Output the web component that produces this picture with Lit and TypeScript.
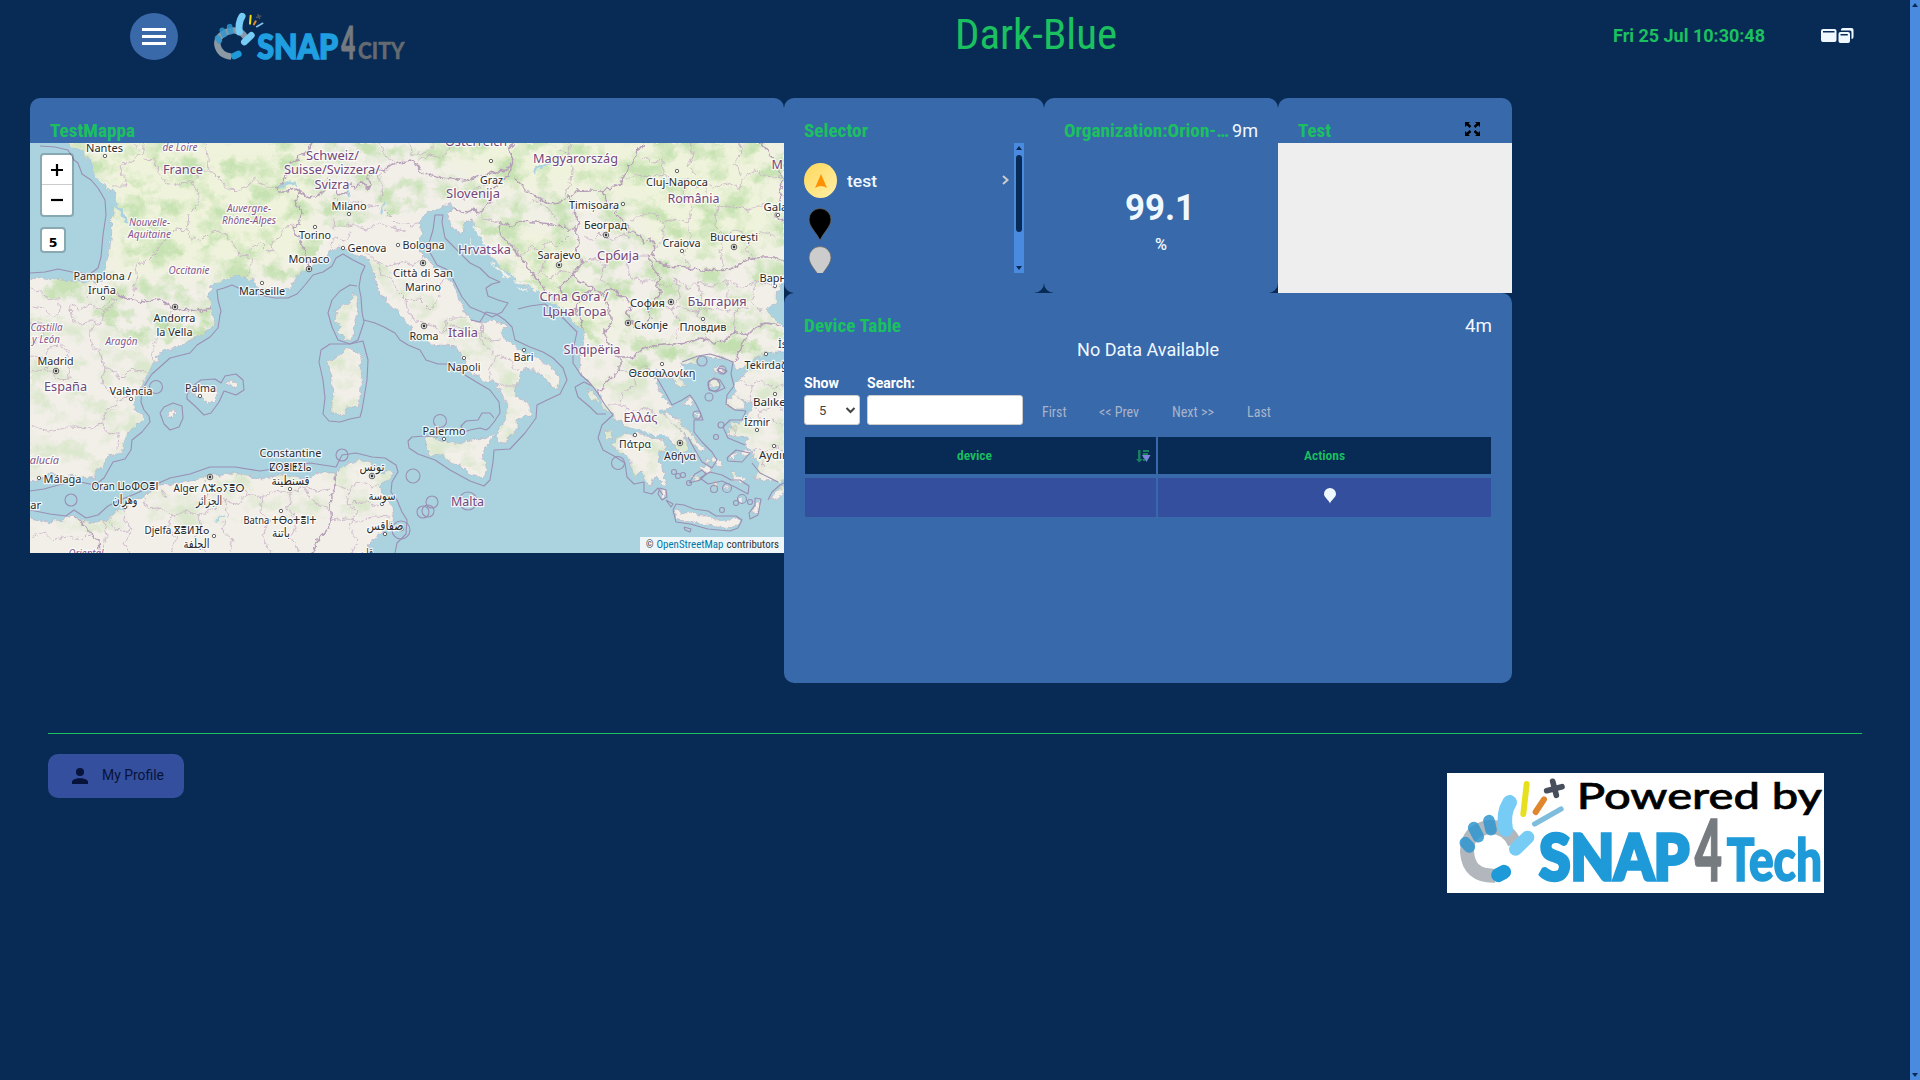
import { LitElement, html, svg, css } from "lit";
import { customElement } from "lit/decorators.js";

/** Single line of text set to an exact width; the baseline sits `size` px below the top. */
const line = (text: string, width: number, size: number, weight = 400, cls = "") => html`
  <svg class="line ${cls}" width=${width} height=${Math.round(size * 1.25)}>
    <text x="0" y=${size} font-size=${size} font-weight=${weight} textLength=${width}
      lengthAdjust="spacingAndGlyphs">${text}</text>
  </svg>`;

const LAND = [
  "66,143 74,148 83,151 85,156 93,161 92,168 96,176 103,185 110,190 114,188 116,197 113,207 112,223 112,236 110,250 105,270 101,280 97,282 77,282 60,279 40,278 30,279 24,279 24,485 30,483 38,480 47,474 58,476 67,476 80,477 92,478 98,471 102,465 108,456 116,454 122,453 124,442 128,433 136,426 145,419 140,414 135,410 133,405 135,400 138,392 142,385 146,377 150,370 153,363 160,361 157,357 162,351 170,349 181,345 190,340 203,334 213,327 215,317 210,308 209,298 209,290 214,285 220,282 229,277 235,275 247,278 254,280 256,287 262,288 270,291 277,291 285,290 292,285 297,277 303,272 310,268 320,261 330,250 340,247 348,250 357,257 367,258 373,270 375,279 378,287 381,295 387,300 392,308 400,313 407,323 413,330 420,337 428,341 435,345 446,345 455,347 462,356 467,361 467,370 475,374 480,378 488,383 494,380 497,384 500,390 502,396 505,400 507,406 508,412 505,418 503,423 499,429 497,433 496,438 497,442 505,444 510,435 516,433 517,428 517,420 523,416 530,415 530,407 528,403 522,399 517,397 515,391 517,385 520,375 525,368 532,370 540,372 544,378 550,382 551,387 558,389 561,380 554,370 547,365 535,357 523,353 513,345 503,338 501,331 507,325 498,322 490,321 480,323 470,320 463,310 460,303 456,293 453,283 445,274 437,270 430,263 425,257 420,250 420,243 422,232 418,220 427,212 436,209 443,207 450,205 454,207 448,213 449,220 452,227 456,231 460,235 464,228 465,220 472,219 476,228 480,237 487,246 488,253 497,263 503,270 510,275 520,284 527,287 540,293 550,302 557,305 563,310 570,316 573,323 581,327 585,331 584,340 583,347 580,360 580,370 583,377 587,380 593,386 597,392 602,398 603,407 609,413 613,415 617,421 624,424 630,427 638,432 653,436 661,437 667,437 673,443 680,452 688,450 687,442 684,435 673,423 666,416 660,412 665,409 673,408 668,402 663,397 659,390 657,383 656,375 657,370 661,371 664,376 672,380 681,386 687,386 679,377 683,374 689,379 684,370 680,363 690,364 697,362 699,357 703,356 714,358 722,358 733,363 737,368 744,367 755,360 765,352 784,352 784,352 790,352 790,325 784,327 780,323 772,316 765,310 770,307 777,303 776,296 778,290 781,284 784,283 790,283 790,138 66,138",
  "740,377 752,368 768,365 790,372 790,484 784,482 775,480 765,481 753,477 758,471 760,463 752,458 753,450 745,446 747,437 738,437 728,435 735,429 730,423 739,423 747,417 750,411 753,403 742,399 735,400 734,392 736,383",
  "618,437 613,444 619,453 625,454 630,460 630,468 635,477 638,475 642,472 645,480 650,487 653,480 655,475 661,481 667,488 664,478 663,467 659,460 657,453 662,451 667,452 666,446 663,440 656,438 647,437 640,434 633,435 626,433",
  "24,518 38,521 50,522 62,519 73,515 80,520 92,523 107,520 114,514 120,507 131,502 143,497 150,490 160,485 173,483 187,482 200,478 213,475 224,475 233,473 246,475 260,478 270,477 280,475 293,477 307,480 313,476 320,473 335,473 342,467 350,463 359,461 367,460 371,464 375,470 381,473 387,471 393,472 390,479 383,483 380,488 382,493 386,500 392,507 393,514 392,520 387,527 382,533 376,538 370,543 368,553 368,560 24,560",
  "353,292 355,296 357,303 357,315 355,323 354,333 350,342 344,337 338,332 340,326 335,322 336,315 335,311 340,307 347,304 351,302",
  "350,347 355,351 362,357 360,365 363,373 361,388 360,398 358,408 353,408 348,407 345,414 340,416 336,412 332,413 332,404 334,397 332,387 332,377 329,368 326,360 331,362 337,357 344,351",
  "425,440 430,436 435,438 439,441 450,442 459,444 468,441 477,439 488,437 495,434 490,443 484,452 482,459 487,468 485,474 483,479 475,475 468,473 461,466 450,462 440,456 430,454 425,449",
  "193,393 202,387 208,389 214,387 218,392 215,400 210,404 204,400 200,396 195,397",
  "227,382 232,381 238,385 236,388 229,385",
  "168,417 169,412 176,409 175,413 171,417",
  "674,511 679,510 681,514 690,512 698,516 707,516 715,521 728,520 733,518 740,520 737,525 733,528 720,526 706,525 696,523 684,521 676,519",
  "664,412 674,416 682,425 691,433 698,443 706,450 701,453 693,443 685,436 678,428 668,420",
  "728,398 735,395 744,402 742,409 732,409 727,404",
  "709,379 717,377 719,386 711,388",
  "728,428 735,427 734,438 729,435",
  "770,498 778,489 784,486 784,493 774,501",
  "604,430 610,431 613,438 607,440",
  "587,388 594,394 598,401 595,402 589,394",
  "712,458 722,462 720,467 713,463", "728,455 736,453 733,460", "741,452 752,450 747,456",
  "701,467 709,463 711,472 703,473", "731,472 746,480 743,484 733,479", "690,475 700,479 695,481",
  "712,485 717,482 717,490", "723,485 730,487 727,491", "756,503 762,500 757,515 752,513", "714,368 724,367 722,372 716,372",
  "661,489 666,490 665,498 661,494", "692,411 700,416 697,420", "683,402 691,398 693,404 684,406",
  "737,498 743,497 743,504 738,503", "705,459 711,460 708,464",
];

const NATIONS = [
  "117,294 125,298 133,300 143,302 150,301 158,299 163,303 171,307 177,308 185,311 193,309 201,311 212,309",
  "310,268 306,258 304,247 300,240 295,232 293,228 299,223 301,216 303,212 298,206 296,200 300,193 297,188 288,192 280,192 276,189 283,183 288,173 291,163 299,157 306,152 312,143",
  "300,193 308,197 320,195 325,190 328,180 334,186 340,195 347,193 350,184 355,188 362,182 367,188 372,186 368,178 371,170 378,168 385,172 387,166 393,164 400,163 409,160 416,163 420,171 429,175 440,178 451,179 466,181 477,176 487,175 497,171 507,170 514,160 508,150 514,143",
  "514,160 511,167 510,176 500,181 494,187 488,192 490,199 486,205 484,210 479,213 472,210 465,213 458,210 453,207",
  "514,178 522,185 529,192 538,198 550,203 562,202 569,196 577,191 590,190 602,190 613,188 622,181 627,169 633,160 639,149 644,143",
  "569,196 573,205 575,215 580,222 577,230",
  "602,190 606,199 613,207 618,215 624,222 629,231 640,235 644,243 650,239 656,245",
  "656,245 652,253 656,260 666,266 681,267 700,270 721,271 735,267 747,260 761,257 775,257 784,262",
  "656,245 649,258 654,269 661,278 656,286 661,293 655,299 649,311 651,318 645,327",
  "500,222 510,227 519,221 535,222 551,224 563,225 569,231 575,228 580,240 576,252 583,262 577,270 572,276 564,282 559,288 563,296 555,300 548,294",
  "500,222 499,231 505,239 513,247 519,256 526,264 533,274 540,283 545,292",
  "572,276 580,281 592,287 602,295 610,288 621,295 632,305 627,313 631,320 634,327 645,327",
  "592,287 585,296 577,303 576,313 580,319 584,330",
  "602,295 608,306 611,317 611,324 604,332 608,342 613,350 620,359 620,369 614,376 606,381 602,390 597,394",
  "620,357 633,357 643,349 656,345 664,344 674,343 690,342 701,338 713,343 724,341 735,331 748,335 742,347 738,355 735,363",
  "748,335 757,326 766,323 780,325",
  "760,143 768,152 774,160 782,178 780,200 775,216 784,222",
  "335,473 336,485 331,495 330,508 332,520 326,532 318,541 312,553",
  "73,515 84,525 91,534 99,540 100,553",
  "30,345 26,350",
];

const REGIONS = [
  "145,143 142,155 133,160 120,165 123,176 127,186 113,186", "142,159 155,160 160,175 168,184 180,183 193,181 201,172 208,172 213,172 220,179 227,189 240,190 249,186 254,179 262,184 270,187 280,188",
  "206,143 208,158 209,172", "193,181 199,194 197,206 189,214 187,230 191,239 202,240 210,232 220,231 229,238 235,247 242,256 252,258 250,268 246,278",
  "187,230 175,229 166,238 158,250 147,261 135,266 137,280 132,296", "249,249 260,243 267,250 275,252 270,243 280,237 284,229 295,224",
  "30,288 38,290 50,300 58,297 60,311 54,318 44,309 32,307", "69,303 80,309 90,305 102,308 112,299 118,300", "70,304 71,317 80,325 91,320 100,325 104,312 118,300", "87,298 95,285 104,275",
  "135,143 140,152", "172,311 167,325 157,338 152,351 153,362", "96,320 90,332 91,345 101,354 104,367 114,371 120,380 131,369 142,371 150,374",
  "30,372 43,370 54,364 68,359 69,351 60,345 52,346 43,357 30,356", "68,359 69,380 58,379 46,368", "105,367 102,385 110,391 118,400 130,396 136,388",
  "30,425 48,431 71,427 95,428 101,422 108,409 119,404", "101,422 107,433 119,434 118,448", "30,323 43,323 45,335 30,344",
  "334,198 345,208 350,202 362,204 376,206 385,211 397,223 412,225 420,222", "335,218 334,228 350,224 366,230 380,223 396,229 406,231", "330,247 335,238 346,240 351,230", "351,248 366,252 377,261 388,266 405,262 414,266 424,255", "377,261 382,275 392,279 398,292 406,300 420,299 430,309 440,298 438,286 447,277", "406,300 407,311 416,322 430,324 440,332 454,325 455,341", "440,332 450,318 466,318", "454,325 467,331 479,334 485,346 497,356 510,360 518,371", "482,323 481,335 491,341 503,340", "497,356 489,368 491,380", "500,386 517,386",
  "380,143 385,155 395,162", "390,168 378,178 384,190 380,202", "410,143 412,154 422,154 434,146", "418,161 428,154 440,158 450,149 451,143",
  "464,200 470,190 483,186 496,180", "500,222 488,221 477,214", "533,200 547,208 556,219", "571,143 568,155 573,168 571,180 565,196", "571,155 560,150", "644,156 652,162 663,160 664,174 677,184 686,180 697,188 705,181 713,187 727,183 740,188",
  "664,174 650,177 636,175 626,179", "686,180 684,195 692,208 688,222 675,219 663,222 655,214 643,214 632,220", "705,181 708,198 718,208 714,225 725,236 738,229 750,238 762,231 775,236", "718,208 733,206 748,211 765,203 780,209", "740,188 745,176 756,170 765,176 780,178", "740,143 742,155 733,163 741,175", "690,143 694,155 687,166 695,175", "663,222 664,237 656,248", "688,222 691,241 684,254 690,267", "725,236 720,251 724,268", "750,238 746,250 755,257",
  "503,239 515,245 520,256 531,247 541,251 547,241 558,246 567,237", "541,251 545,262 539,274 551,278 560,270 573,274", "583,236 594,240 601,233 613,241 622,234 631,238", "583,262 595,258 605,265 615,258 627,262 640,256 650,256", "605,265 602,278 610,288", "627,262 630,276 641,282 657,279",
  "656,282 667,287 676,279 688,289 697,281 712,287 727,280 742,288 757,281 775,287", "676,279 680,296 672,309 680,324 675,340", "697,281 703,299 697,315 708,328 704,338", "727,280 728,297 739,305 733,320 735,331", "757,281 752,300 762,314", "651,303 665,309 680,307 695,312 712,309 730,311 748,306",
  "620,370 634,374 645,366 652,372", "634,374 636,386 622,391 620,404 632,411 645,408 655,413", "620,404 608,404",
  "30,537 44,532 53,540 66,536 80,540 90,534", "104,521 107,536 103,548", "128,503 124,518 132,530 124,543 130,553", "143,498 148,510 163,508 172,516 187,510 198,516 212,509 224,500 238,504 247,494 262,497 275,490 290,493 303,486 316,492 330,490", "172,516 167,530 177,538 170,552", "198,516 201,528 195,540 207,553", "224,500 228,515 222,530 233,540 231,553", "262,497 260,511 269,521 262,537 271,553", "290,493 288,509 297,520 291,538 300,551", "247,494 240,483", "303,486 314,502 330,510", "335,485 348,489 360,482 372,487 380,484", "350,488 347,503 357,512 349,528 357,540 352,553", "331,520 347,518 360,522 375,516 390,517", "347,503 365,502 380,506", "160,488 167,498", "205,480 208,495 198,502", "107,520 120,532 132,530",
  "740,380 752,386 760,380 775,388 784,385", "752,386 751,402 760,412 773,405 784,410", "747,418 760,424 772,420 784,427", "753,448 765,452 775,446 784,450", "760,412 758,424", "765,452 763,468",
];

const MARINE = [
  "30,273 45,272 58,269 72,272 90,274 98,268 101,257 103,235 106,215 105,200 98,188 91,180 82,174 78,163 74,160 68,150 55,147 40,146",
  "30,491 44,489 62,484 80,482 95,485 104,478 113,462 125,459 131,450 132,440 142,432 150,422 149,416 144,410 141,402 142,390 148,380 152,374 160,367 170,358 190,353 197,345 210,337 218,328 220,315 221,311 218,300 217,290 224,288 232,285 245,291 260,295 275,298 288,298 297,294 305,285 313,275 323,272 332,266 336,258 343,254 353,260 365,266 361,275 359,287 361,297 362,312 364,322 358,340 350,344 338,340 332,327 328,313 332,300 340,291 350,285 357,286",
  "364,320 375,323 384,327 395,333 400,340 408,345 420,350 426,360 438,364 452,364 465,375 478,383 490,390 499,402 500,413 494,422 489,428 486,430",
  "486,430 480,428 470,430 464,432 461,426 466,421 478,420 482,413 490,413 494,418",
  "471,320 480,322 486,312 496,314 505,320 512,327 515,340 530,347 543,352 553,358 563,368 567,380 560,394 545,401 537,405 536,418 525,433 510,449 494,450 493,462 490,480 484,486 470,481 450,470 435,460 418,454 409,448 408,441 412,437 424,436 438,437",
  "427,247 437,265 448,270 455,283 462,297 470,307 482,312 492,317 502,312 508,303 498,300 488,296 486,288 492,284 500,282 489,277 480,268 470,263 460,253 445,238 442,222 443,215 435,215 433,230 430,240 427,247",
  "518,309 530,306 545,304 560,315 570,325 577,332 573,350 573,363 581,375 590,383 597,392 605,405 613,415 602,425 598,438 603,450 614,456 625,463 627,477 634,484 644,482 644,492 652,494 658,488 663,495",
  "575,387 578,397 590,407 597,414 606,414", "575,387 584,382 592,386",
  "30,510 50,514 66,516 74,510 86,518 98,515 108,506 120,500 135,494 150,487 170,478 190,474 210,467 235,467 260,471 285,467 310,463 336,467 342,455 356,453 372,457 385,458 396,465 398,472 392,482 391,492 397,500 402,512 407,520 406,534 397,543 395,553",
  "350,344 363,341 368,360 367,380 362,410 360,417 350,419 340,422 329,421 323,414 325,398 323,380 319,362 321,350 330,344 350,344",
  "187,395 190,388 201,380 215,379 221,383 225,376 236,374 243,380 244,390 236,395 224,391 219,402 211,413 204,415 195,406 187,399 187,395",
  "160,413 164,407 173,403 182,406 183,418 179,427 170,430 164,424 160,413",
  "673,510 676,504 684,505 694,509 708,511 716,516 728,516 736,516 742,520 738,528 730,531 708,529 690,524 676,522 673,510",
  "657,378 665,392 672,405 682,400 690,395 695,402 700,412 703,420 694,420 694,432 702,442 712,452 717,460 712,468 702,462 695,450 688,437",
  "682,362 690,359 698,356 710,354 723,358 733,362 731,374 734,386 727,395 726,404 735,410 746,411 742,420 730,420 723,427 728,438 745,445",
  "708,382 714,378 720,380 725,388 716,392 709,390 708,382", "720,368 727,371 724,374 717,370 720,368",
  "700,478 710,472 722,475 731,480 740,480 749,486 748,494 735,487 722,481 708,484 700,478",
  "689,483 700,480 706,474 702,470 695,474 689,483", "768,500 772,492 780,485 784,483", "755,498 761,499 758,515 750,519 749,513 755,505 755,498",
  "727,458 736,450 750,453 742,462 728,461 727,458", "752,463 760,473 770,478 778,482",
  "660,488 666,490 667,497 662,500 658,494 660,488", "666,500 673,504 671,507 666,500", "684,527 691,529 690,532 685,530 684,527",
];

const RINGS: [number, number, number][] = [
  [156, 387, 6.5], [71, 500, 6], [342, 455, 6], [440, 421, 6.5], [413, 476, 7], [432, 502, 6], [423, 512, 6], [428, 511, 6],
  [468, 501, 9], [618, 463, 6.5], [401, 530, 9], [674, 472, 2.5], [678, 476, 2.5], [683, 475, 2.5], [716, 437, 2.5], [714, 489, 3.5],
  [727, 488, 4.5], [736, 503, 2.5], [742, 499, 4.5], [750, 502, 2.5], [722, 510, 2.5], [721, 425, 3], [709, 397, 4], [722, 370, 4],
  [702, 361, 5], [714, 385, 6], [689, 483, 2.5], [697, 415, 4],
];

type Label = [string, number, number, number, number];
/* text, centre x, baseline, width, size */
const CITIES: Label[] = [
  ["Nantes", 104.5, 152, 37, 11.5], ["Milano", 349, 210, 35, 11.5], ["Torino", 315, 238.5, 32, 11.5], ["Genova", 367, 252, 39, 11.5],
  ["Monaco", 309, 263, 41, 11.5], ["Marseille", 262, 295, 46, 11.5], ["Pamplona /", 102.5, 280, 58, 11.5], ["Iruña", 102, 294, 28, 11.5],
  ["Andorra", 174.5, 322, 42, 11.5], ["la Vella", 174.5, 336, 36, 11.5], ["Graz", 491.5, 183.5, 23, 11.5], ["Cluj-Napoca", 677, 185.5, 62, 11.5],
  ["Timișoara", 594, 209, 50, 11.5], ["Београд", 605.5, 229, 43, 11.5], ["Bologna", 423.5, 249, 42, 11.5], ["Città di San", 423, 277, 60, 11.5],
  ["Marino", 423, 291, 36, 11.5], ["Sarajevo", 559, 259, 43, 11.5], ["Craiova", 681.5, 247, 38, 11.5], ["București", 734, 241, 48, 11.5],
  ["Варна", 776, 282, 33, 11.5], ["София", 647.5, 307, 35, 11.5], ["Скопје", 651, 328.5, 34, 11.5], ["Пловдив", 703, 330.5, 47, 11.5],
  ["Galați", 779, 211, 31, 11.5], ["Madrid", 55.5, 365, 36, 11.5], ["València", 131, 395, 43, 11.5], ["Palma", 200.5, 392, 31, 11.5],
  ["Málaga", 62.5, 483, 38, 11.5], ["Constantine", 290.5, 457, 62, 11.5], ["Roma", 424, 340, 29, 11.5], ["Napoli", 464, 371, 33, 11.5],
  ["Bari", 523.5, 361, 20, 11.5], ["Palermo", 444, 435, 43, 11.5], ["Θεσσαλονίκη", 662, 377, 67, 11.5], ["Πάτρα", 635, 448, 32, 11.5],
  ["Αθήνα", 680, 460, 32, 11.5], ["Tekirdağ", 766, 369, 43, 11.5], ["Balıkesir", 776, 406, 46, 11.5], ["İzmir", 757, 426, 26, 11.5],
  ["Aydın", 774, 459, 30, 11.5], ["İstanbul", 799, 348, 42, 11.5], ["Gibraltar", 18, 509, 46, 11.5],
  ["Oran ⵡⴰⵀⵔⴻⵏ", 125, 490, 67, 11.5], ["وهران", 125, 504, 25, 12.5], ["Alger ⴷⵣⴰⵢⴻⵔ", 209, 491.5, 71, 11.5], ["الجزائر", 209, 505, 26, 12.5],
  ["ⵇⵙⴻⵏⵟⵉⵏⴰ", 290.5, 471, 42, 11], ["قسنطينة", 290.5, 485, 38, 12.5], ["تونس", 372, 471, 25, 12.5], ["سوسة", 382, 500, 27, 12.5],
  ["صفاقس", 385, 530, 37, 12.5], ["Batna ⵜⴱⴰⵜⴻⵏⵜ", 280, 524, 73, 11.5], ["باتنة", 281, 537, 18, 12.5], ["Djelfa ⴵⴻⵍⴼⴰ", 177, 534, 65, 11.5],
  ["الجلفة", 196.5, 548, 26, 12.5], ["قابس", 363, 557, 20, 12],
];
const COUNTRIES: Label[] = [
  ["France", 183, 174, 40, 13], ["Schweiz/", 332.5, 159.5, 53, 13], ["Suisse/Svizzera/", 332, 174, 96, 13], ["Svizra", 332, 189, 35, 13],
  ["Österreich", 476, 145.5, 62, 13], ["Magyarország", 575.5, 163, 85, 13], ["Slovenija", 473, 197.5, 54, 13], ["Hrvatska", 484.5, 254, 53, 13],
  ["România", 693.5, 203, 52, 13], ["Србија", 618, 260, 42, 13], ["Crna Gora /", 574, 301, 69, 13], ["Црна Гора", 574.5, 316, 64, 13],
  ["България", 717, 305.5, 59, 13], ["Moldova", 797, 169, 51, 13], ["España", 65.5, 391, 43, 13], ["Italia", 463, 337, 30, 13],
  ["Shqipëria", 592, 354, 57, 13], ["Ελλάς", 640.5, 422, 34, 13], ["Malta", 467.5, 506, 33, 13],
];
const PROVINCES: Label[] = [
  ["de Loire", 180, 151, 35, 11], ["Nouvelle-", 149.5, 226, 41, 11], ["Aquitaine", 149.5, 238, 43, 11],
  ["Auvergne-", 249, 212, 44, 11], ["Rhône-Alpes", 249, 223.5, 54, 11], ["Occitanie", 189, 274, 41, 11], ["Castilla", 46.5, 331, 32, 11],
  ["y León", 46, 343, 28, 11], ["Aragón", 121.5, 345, 32, 11], ["Andalucía", 35, 464, 48, 11], ["Oriental", 86, 557, 35, 11],
];
const TOWNS: [number, number][] = [
  [105, 156], [349, 214], [315, 227], [343, 248], [398, 245], [262, 283], [103, 298], [491, 161], [677, 171], [623, 204], [682, 251],
  [775, 286], [703, 319], [778, 215], [131, 399], [200, 396], [39, 478], [290, 489], [464, 358], [524, 350], [444, 439], [662, 364],
  [635, 435], [766, 354], [775, 394], [757, 430], [774, 446], [125, 507], [382, 504], [385, 534], [281, 511], [214, 536],
];
const CAPITALS: [number, number][] = [
  [309, 269], [175, 307], [606, 235], [423, 263], [559, 265], [734, 247], [671, 302], [628, 323], [56, 371], [424, 326], [680, 443],
  [210, 477], [372, 476], [401, 528],
];

const labels = (items: Label[], cls: string) =>
  items.map(([t, x, y, w, s]) => svg`<text class=${cls} x=${x} y=${y} font-size=${s} textLength=${w}
    lengthAdjust="spacingAndGlyphs" text-anchor="middle">${t}</text>`);

@customElement("geo-map")
class GeoMap extends LitElement {
  static styles = css`
    :host { display: block; width: 754px; height: 410px; position: relative; overflow: hidden; }
    svg { display: block; }
    .coast { fill: #f2efe9; stroke: #b9a3bd; stroke-width: .5; }
    .nation { fill: none; stroke: #b79fb9; stroke-width: 1.5; }
    .region { fill: none; stroke: #c6afc6; stroke-width: .8; }
    .marine { fill: none; stroke: #9a8fb3; stroke-width: 1.1; stroke-linejoin: round; }
    .town { fill: #fff; stroke: #555; stroke-width: .9; }
    .dot { fill: #333; }
    text { font-family: "Noto Sans", "DejaVu Sans", sans-serif; paint-order: stroke; stroke: #fffc; stroke-width: 2.6px; stroke-linejoin: round; }
    .city { fill: #2c2c2c; }
    .country { fill: #74477c; }
    .province { fill: #85588c; font-style: italic; }
    .controls { position: absolute; left: 10px; top: 10px; display: flex; flex-direction: column; gap: 10px; align-items: flex-start; }
    .zoom, .level { border: 2px solid #0003; border-radius: 4px; background-clip: padding-box; background-color: #fff; color: #000; }
    .zoom { width: 30px; }
    .key { height: 29px; display: grid; place-items: center; }
    .key + .key { border-top: 1px solid #ccc; height: 30px; }
    .level { display: grid; place-items: center; font: 700 12.5px/20px "DejaVu Sans", sans-serif; box-sizing: border-box; width: 26px; height: 26px; padding-top: 4px; }
    .credit { position: absolute; right: 0; bottom: 0; width: 138px; height: 16px; padding-left: 6px; background: #fffc; }
    .credit text { font-family: "Roboto Condensed", Roboto, sans-serif; stroke: none; fill: #333; }
    .credit .link { fill: #0078a8; }
  `;
  render() {
    return html`
      <svg width="754" height="410" viewBox="30 143 754 410">
        <defs>
          <clipPath id="land">${LAND.map((p) => svg`<polygon points=${p} />`)}</clipPath>
          <filter id="rough" x="30" y="143" width="754" height="410" filterUnits="userSpaceOnUse">
            <feTurbulence type="fractalNoise" baseFrequency="0.17" numOctaves="3" seed="4" result="n" />
            <feDisplacementMap in="SourceGraphic" in2="n" scale="7" xChannelSelector="R" yChannelSelector="G" />
          </filter>
          <filter id="wood" x="30" y="143" width="754" height="410" filterUnits="userSpaceOnUse" color-interpolation-filters="sRGB">
            <feTurbulence type="fractalNoise" baseFrequency="0.04 0.05" numOctaves="6" seed="23" result="n" />
            <feColorMatrix in="n" values="0 0 0 0 .74  0 0 0 0 .87  0 0 0 0 .66  3.4 0 0 0 -1.5" result="c" />
            <feComposite in="c" in2="SourceAlpha" operator="in" />
          </filter>
          <filter id="soft"><feGaussianBlur stdDeviation="14" /></filter>
        </defs>
        <rect x="30" y="143" width="754" height="410" fill="#aad3df" />
        <g filter="url(#rough)">
          ${LAND.map((p) => svg`<polygon class="coast" points=${p} />`)}
          <g clip-path="url(#land)">
            <g filter="url(#soft)" fill="#eff3db">
              <polygon points="60,130 320,130 310,260 220,275 110,280 100,190" />
              <polygon points="400,130 780,130 784,250 660,260 620,200 500,190" />
              <polygon points="490,220 560,230 580,290 650,340 560,330" />
            </g>
            <g filter="url(#wood)" opacity=".8">
              <polygon points="60,138 790,138 790,345 640,370 600,345 500,270 440,205 330,230 300,280 210,300 220,330 160,360 100,320 30,320 30,278 110,270 110,190" />
            </g>
            <g filter="url(#wood)" opacity=".42">
              <polygon points="30,320 220,320 100,480 30,480" /><polygon points="30,480 400,455 400,515 30,535" />
              <polygon points="360,250 570,390 500,480 420,450 470,360 390,300" /><polygon points="330,290 365,290 365,420 325,420" />
              <polygon points="580,340 790,340 790,490 600,490" />
            </g>
            ${REGIONS.map((p) => svg`<polyline class="region" points=${p} />`)}
            ${NATIONS.map((p) => svg`<polyline class="nation" points=${p} />`)}
          </g>
          <g fill="none" stroke="#aad3df">
            <path stroke-width="3" d="M113 203l8 8 6 12M279 188q8-8 17-4M532 172l12-6 10-5" />
            <path stroke-width="2" d="M380 215l5-12M350 197l-3-10M118 507l7 3M216 522l7-7M625 427l30 9 14 2M744 368l20-6M467 222l12 25 14 18 14 8" />
            <path stroke-width="2" stroke-dasharray="7 3" d="M471 220l6 24 14 16 22 18 26 14M510 285l22 9" />
          </g>
        </g>
        <g fill="#f2efe9" filter="url(#rough)">
          <path d="M474 226l5 3 10 17-3 1-10-16zM490 262l12 7 9 9-4 0zM513 280l16 3 2 2-14-1zM516 287l18 4-12-1zM470 238l4 8-3-1z" />
        </g>
        ${MARINE.map((p) => svg`<polyline class="marine" points=${p} />`)}
        ${RINGS.map(([x, y, r]) => svg`<circle class="marine" cx=${x} cy=${y} r=${r} />`)}
        ${TOWNS.map(([x, y]) => svg`<circle class="town" cx=${x} cy=${y} r="1.7" />`)}
        ${CAPITALS.map(([x, y]) => svg`<circle class="town" cx=${x} cy=${y} r="2.8" /><circle class="dot" cx=${x} cy=${y} r="1.4" />`)}
        ${labels(PROVINCES, "province")} ${labels(COUNTRIES, "country")} ${labels(CITIES, "city")}
      </svg>
      <div class="controls">
        <div class="zoom">
          <div class="key"><svg width="14" height="14"><path d="M1 7h12M7 1v12" stroke="#000" stroke-width="2.2" /></svg></div>
          <div class="key"><svg width="14" height="14"><path d="M1 7h12" stroke="#000" stroke-width="2.2" /></svg></div>
        </div>
        <div class="level">5</div>
      </div>
      <div class="credit">
        <svg width="134" height="16" font-size="11.5">
          <text x="0" y="11" textLength="7.5" lengthAdjust="spacingAndGlyphs">©</text>
          <text class="link" x="10.500" y="11" textLength="67" lengthAdjust="spacingAndGlyphs">OpenStreetMap</text>
          <text x="80.5" y="11" textLength="52.5" lengthAdjust="spacingAndGlyphs">contributors</text>
        </svg>
      </div>`;
  }
}

const cityLogo = html`
  <svg class="logo" width="192" height="48" viewBox="342 36 576 144">
    <g fill="none" stroke-linecap="round">
      <path d="M440 118Q424 86 392 92Q350 104 352 134Q358 166 394 170" stroke="#8b99a5" stroke-width="19" stroke-linecap="butt" />
      <path d="M403 168L415 162" stroke="#1f9ad8" stroke-width="20" />
      <path d="M426 49Q414 68 418 96" stroke="#76ccf4" stroke-width="21" />
      <path d="M433 126L454 106" stroke="#76ccf4" stroke-width="20" />
      <g stroke="#2f97cf" stroke-opacity=".85" stroke-width="17"><path d="M353 114l5 8M367 91l5 13M389 80l3 15" /></g>
      <path d="M452 47l-2 24" stroke="#f0e010" stroke-width="6" />
      <path d="M467 64l-5 9" stroke="#e8862a" stroke-width="6" />
      <path d="M470 80l18-10" stroke="#7fc4e8" stroke-width="5" />
      <path d="M470 52l12-4M474 44l5 11" stroke="#4c525b" stroke-width="5" />
    </g>
    <g class="brand">
      <text x="472" y="177" font-size="102" textLength="242" lengthAdjust="spacingAndGlyphs" fill="#1f9ee0" stroke="#1f9ee0" stroke-width="5">SNAP</text>
      <text x="724" y="177" font-size="138" textLength="42" lengthAdjust="spacingAndGlyphs" fill="#757a80" stroke="#757a80" stroke-width="3">4</text>
      <text x="774" y="177" font-size="68" textLength="140" lengthAdjust="spacingAndGlyphs" fill="#646a70" stroke="#646a70" stroke-width="1">CITY</text>
    </g>
  </svg>`;

const techLogo = html`
  <svg class="powered" width="377" height="120" viewBox="51 39 1131 360">
    <rect x="51" y="39" width="1131" height="360" fill="#fff" />
    <g fill="none" stroke-linecap="round">
      <path d="M254 250Q232 200 180 201Q110 210 111 275Q116 350 195 347" stroke="#b1b7bc" stroke-width="42" stroke-linecap="butt" />
      <path d="M205 345L222 336" stroke="#1f9ad8" stroke-width="43" />
      <path d="M239 127Q218 160 227 208" stroke="#76ccf4" stroke-width="44" />
      <path d="M257 267L293 232" stroke="#76ccf4" stroke-width="40" />
      <g stroke="#2f97cf" stroke-opacity=".85" stroke-width="35"><path d="M106 248l12 13M131 203l14 27M177 182l6 27" /></g>
      <path d="M290 72l-10 90" stroke="#e6e01e" stroke-width="18" />
      <path d="M342 118l-25 38" stroke="#e0862c" stroke-width="18" />
      <path d="M314 192l79-45" stroke="#7fbddd" stroke-width="16" />
      <path d="M350 92l46-12M368 64l11 42" stroke="#474e5c" stroke-width="17" />
    </g>
    <text class="poweredby" x="440" y="147" font-size="112" textLength="736" lengthAdjust="spacingAndGlyphs">Powered by</text>
    <g class="brand">
      <text x="328" y="361" font-size="186" textLength="450" lengthAdjust="spacingAndGlyphs" fill="#1f9ad8" stroke="#1f9ad8" stroke-width="11">SNAP</text>
      <text x="794" y="362" font-size="258" textLength="82" lengthAdjust="spacingAndGlyphs" fill="#767b80" stroke="#767b80" stroke-width="5">4</text>
      <text x="890" y="362" font-size="176" textLength="286" lengthAdjust="spacingAndGlyphs" fill="#1f9ad8" stroke="#1f9ad8" stroke-width="5">Tech</text>
    </g>
  </svg>`;

const pin = (fill: string) => html`<svg class="pin" width="24" height="34" viewBox="0 0 24 34">
  <path d="M12 32.500C9 25 1 19 1 11.500a11 11 0 0 1 22 0C23 19 15 25 12 32.500z" fill=${fill} stroke="#666" stroke-width=".8" /></svg>`;

@customElement("app-root")
class AppRoot extends LitElement {
  static styles = css`
    :host { display: block; width: 1920px; height: 1080px; overflow: hidden; background: #082b56; font-family: Roboto, sans-serif; color: #f0f8ff; }
    svg { display: block; flex: none; }
    .line { overflow: visible; fill: currentColor; font-family: "Roboto Condensed", Roboto, sans-serif; }
    .wide { font-family: Roboto, sans-serif; }
    .green { color: #1bc15f; }
    .page { display: grid; grid-template-columns: 1fr 10px; height: 1080px; }
    .rail { background: #4a8bdf; display: flex; flex-direction: column; justify-content: space-between; align-items: center; }
    header { display: grid; grid-template-columns: 48px 228px 1fr auto auto; height: 98px; padding: 0 56px 0 130px; box-sizing: border-box; align-items: start; }
    .burger { width: 48px; height: 47px; margin-top: 13px; border-radius: 50%; background: #3a69aa; display: grid; place-items: center; }
    .logo { margin: 12px 0 0 36px; overflow: visible; }
    .brand { font-family: Lato, sans-serif; font-weight: 900; }
    .poweredby { font-family: Lato, sans-serif; font-weight: 500; stroke: #000; stroke-width: 2px; }
    .heading { padding: 7px 0 0 549px; }
    .clock { padding: 24px 56px 0 0; }
    .screens { padding-top: 28px; }
    .board { display: grid; grid-template-columns: 754px 260px 234px 234px; grid-template-rows: 195px 390px; padding-left: 30px; }
    .card { background: #3869aa; border-radius: 10px; box-sizing: border-box; min-width: 0; }
    .map { grid-row: span 2; height: 455px; border-radius: 10px 10px 0 0; }
    .bar { display: flex; justify-content: space-between; height: 45px; padding: 20px 20px 0; box-sizing: border-box; }
    .list { display: flex; height: 130px; padding: 0 20px; }
    .items { flex: 1; overflow: hidden; padding-top: 20px; height: 110px; }
    .entry { display: flex; align-items: center; height: 35px; margin-bottom: 10px; }
    .entry .line { margin: -1px auto 0 10px; }
    .badge { width: 33px; height: 35px; border-radius: 50%; background: linear-gradient(135deg, #ffd75a, #fff0a8); display: grid; place-items: center; }
    .chev { margin: 0 5px 1px 0; }
    .pin { margin: 0 0 4px 4px; }
    .scroll { width: 10px; background: #4a8bdf; display: flex; flex-direction: column; align-items: center; box-sizing: border-box; padding: 3px 0; }
    .thumb { width: 6px; height: 77px; border-radius: 3px; background: #082b56; margin: 5px 0 auto; }
    .value { display: flex; flex-direction: column; align-items: center; padding: 41px 3px 0 0; }
    .unit { margin: 5px 0 0 3px; }
    .frame { background: #eee; height: 150px; }
    .square { border-radius: 10px 10px 0 0; }
    .expand { margin: 4px 12px 0 0; }
    .table { grid-column: 2 / 5; }
    .nodata { display: flex; justify-content: center; height: 36px; }
    .tools { display: flex; height: 52px; padding-left: 20px; color: #fff; }
    .field { display: flex; flex-direction: column; gap: 3px; margin-right: 7px; }
    .box { height: 28px; border: 1px solid #ccc; border-radius: 3px; background: #fff; color: #444; display: flex; align-items: center; justify-content: space-between; box-sizing: content-box; }
    .select { width: 54px; font-size: 13px; }
    .select span { margin-left: 14px; }
    .select svg { margin-right: 3px; }
    .search { width: 154px; }
    .pager { display: flex; gap: 32.700px; padding: 29px 0 0 12px; color: #a9b4cb; }
    .rows { display: grid; grid-template-columns: 351px 333px; grid-template-rows: 37px 39px; gap: 4px 2px; padding: 11px 0 0 21px; }
    .cell { background: #344f9d; display: grid; place-items: center; }
    .head { background: #082b56; color: #1bc15f; }
    .head .line { margin-bottom: 2px; }
    .sorted { grid-template-columns: 1fr auto; }
    .sorted .line { margin-left: 7px; }
    .mark { margin: 0 0 3px 10px; }
    footer { margin: 50px 48px 0; border-top: 1px solid #1bc15f; display: flex; justify-content: space-between; align-items: flex-start; }
    .profile { width: 136px; height: 44px; margin-top: 20px; border-radius: 10px; background: #344f9d; color: #07133a; display: flex; align-items: center; gap: 14px; padding-left: 24px; box-sizing: border-box; }
    .profile .line { margin-bottom: 2px; }
    .powered { margin: 39px 38px 0 0; overflow: visible; }
  `;
  render() {
    return html`
      <div class="page">
        <main>
          <header>
            <div class="burger"><svg width="24" height="17"><path d="M0 1.500h24M0 8.500h24M0 15.500h24" stroke="#fff" stroke-width="3" /></svg></div>
            ${cityLogo}
            <div class="heading green">${line("Dark-Blue", 162, 42)}</div>
            <div class="clock green">${line("Fri 25 Jul 10:30:48", 152, 18, 700, "wide")}</div>
            <svg class="screens" width="33" height="16" fill="#f0f8ff">
              <path fill-rule="evenodd" d="M2 1h11.500a2 2 0 0 1 2 2v9a2 2 0 0 1-2 2H2a2 2 0 0 1-2-2V3a2 2 0 0 1 2-2zM2 3v1.400h11.500V3z" />
              <path d="M22 0h8.500a2 2 0 0 1 2 2v7a2 2 0 0 1-2 2V4a1.500 1.500 0 0 0-1.500-1.500h-9A2 2 0 0 1 22 0z" />
              <path fill-rule="evenodd" d="M19.500 4h7.500a2 2 0 0 1 2 2v7a2 2 0 0 1-2 2h-7.500a2 2 0 0 1-2-2V6a2 2 0 0 1 2-2zm0 2v1.400h7.300V6z" />
            </svg>
          </header>
          <section class="board">
            <article class="card map">
              <div class="bar green">${line("TestMappa", 85, 19, 700)}</div>
              <geo-map></geo-map>
            </article>
            <article class="card">
              <div class="bar green">${line("Selector", 64, 19, 700)}</div>
              <div class="list">
                <div class="items">
                  <div class="entry">
                    <span class="badge"><svg width="12" height="14"><path d="M6 0l6 14q-6-4-12 0z" fill="#ff9100" /></svg></span>
                    ${line("test", 30, 17, 500, "wide")}
                    <svg class="chev" width="7" height="10"><path d="M1 1l4.500 4L1 9" fill="none" stroke="#ccc" stroke-width="2" /></svg>
                  </div>
                  ${pin("#000")} ${pin("#ccc")}
                </div>
                <div class="scroll">
                  <svg width="6" height="4"><path d="M3 0l3 4H0z" fill="#082b56" /></svg>
                  <span class="thumb"></span>
                  <svg width="6" height="4"><path d="M0 0h6L3 4z" fill="#082b56" /></svg>
                </div>
              </div>
            </article>
            <article class="card">
              <div class="bar"><span class="green">${line("Organization:Orion-…", 165, 19, 700)}</span>${line("9m", 26, 19, 400, "wide")}</div>
              <div class="value">${line("99.1", 70, 36, 700, "wide")}<div class="unit">${line("%", 12, 16, 500, "wide")}</div></div>
            </article>
            <article class="card square">
              <div class="bar"><span class="green">${line("Test", 33, 19, 700)}</span>
                <svg class="expand" width="15" height="14" stroke="#000" stroke-width="2.400">
                  <path d="M0 0h5L0 5zM15 0h-5l5 5zM0 14h5L0 9zM15 14h-5l5-5z" stroke="none" /><path d="M1 1l4.500 4M14 1L9.500 5M1 13l4.500-4M14 13L9.500 9" />
                </svg></div>
              <div class="frame"></div>
            </article>
            <article class="card table">
              <div class="bar"><span class="green">${line("Device Table", 97, 19, 700)}</span>${line("4m", 27, 19, 400, "wide")}</div>
              <div class="nodata">${line("No Data Available", 142, 18, 400, "wide")}</div>
              <div class="tools">
                <div class="field">${line("Show", 35, 14, 700, "wide")}
                  <div class="box select"><span>5</span><svg width="11" height="7"><path d="M1.500 1l4 4 4-4" fill="none" stroke="#444" stroke-width="2" /></svg></div></div>
                <div class="field">${line("Search:", 48, 14, 700, "wide")}<div class="box search"></div></div>
                <div class="pager">${line("First", 24.5, 14)}${line("<< Prev", 40, 14)}${line("Next >>", 42, 14)}${line("Last", 24, 14)}</div>
              </div>
              <div class="rows">
                <div class="cell head sorted">${line("device", 35, 12.5, 600)}
                  <svg width="20" height="16" viewBox="0 0 20 16"><g fill="#17805f"><path d="M2 2h2.500v9H7L3.200 14.500 0 11h2z" /><path d="M7 2h6v2H7zM7 5h5v2H7zM7 8h4v2H7zM7 11h2v2H7z" /></g><path d="M6 7h8.500L10.500 14z" fill="#7c84d8" /></svg></div>
                <div class="cell head">${line("Actions", 41, 12.5, 600)}</div>
                <div class="cell"></div>
                <div class="cell"><svg width="12" height="16" class="mark"><path d="M6 15.500C5 12 0 9.500 0 6a6 6 0 0 1 12 0c0 3.500-5 6-6 9.500z" fill="#f0f8ff" /></svg></div>
              </div>
            </article>
          </section>
          <footer>
            <div class="profile">
              <svg width="16" height="16"><circle cx="8" cy="4" r="4" fill="#07133a" /><path d="M0 16v-2c0-5 16-5 16 0v2z" fill="#07133a" /></svg>
              ${line("My Profile", 62, 14, 400, "wide")}
            </div>
            ${techLogo}
          </footer>
        </main>
        <div class="rail">
          <svg width="8" height="8"><path d="M4 3l3 4H1z" fill="#082b56" /></svg>
          <svg width="8" height="8"><path d="M1 1h6L4 5z" fill="#082b56" /></svg>
        </div>
      </div>`;
  }
}
